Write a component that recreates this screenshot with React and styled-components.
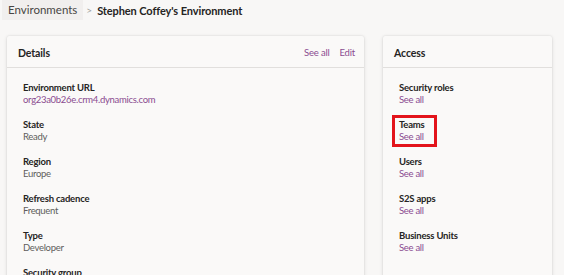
import React from 'react'
import styled, { createGlobalStyle } from 'styled-components'

const GlobalStyle = createGlobalStyle`
  html, body {
    margin: 0;
    padding: 0;
    background: #f8f7f6;
    font-family: Lato, "Open Sans", sans-serif;
    color: #323130;
  }
`

const Page = styled.div`
  width: 564px;
  height: 275px;
  overflow: hidden;
  padding: 0 12px 0 7px;
  box-sizing: border-box;
`

const Breadcrumb = styled.div`
  display: flex;
  align-items: center;
  height: 20px;
  margin-left: -5px;
  font-size: 11.5px;
`

const Crumb = styled.span`
  background: #f1efee;
  color: #484644;
  padding: 0 6px;
  line-height: 20px;
`

const Chevron = styled.span`
  color: #a19f9d;
  margin: 0 5px 0 3px;
  font-size: 10px;
`

const Current = styled.span`
  font-weight: 700;
  font-size: 11px;
  color: #252423;
  letter-spacing: -0.1px;
`

const Columns = styled.div`
  display: grid;
  grid-template-columns: 357px 169px;
  column-gap: 19px;
  margin-top: 16px;
`

const Card = styled.section`
  background: #faf9f8;
  border-radius: 2px;
  box-shadow: 0 0 2px rgba(0, 0, 0, 0.12), 0 1px 4px rgba(0, 0, 0, 0.1);
  height: 260px;
`

const CardHeader = styled.header`
  display: flex;
  align-items: center;
  justify-content: space-between;
  height: 32px;
  padding: 2px 9px 0 11px;
  box-sizing: border-box;
  border-bottom: 1px solid #e1dfdd;
`

const CardTitle = styled.h2`
  margin: 0;
  font-size: 10.5px;
  font-weight: 700;
  letter-spacing: -0.1px;
  color: #252423;
`

const Actions = styled.div`
  display: flex;
  gap: 10px;
`

const Link = styled.a`
  color: #8a4c90;
  font-size: 9.5px;
  letter-spacing: -0.2px;
  text-decoration: none;
  cursor: pointer;
`

const CardBody = styled.div`
  display: flex;
  flex-direction: column;
  gap: 13px;
  padding: 14px 16px;
`

const Item = styled.div`
  display: flex;
  flex-direction: column;
  width: fit-content;
  ${props => props.highlight && `
    border: 3px solid #e3141b;
    padding: 1px 9px 1px 4px;
    margin: -4px -12px -4px -7px;
  `}
`

const Label = styled.div`
  font-size: 9.5px;
  font-weight: 700;
  line-height: 12px;
  letter-spacing: -0.2px;
  color: #252423;
`

const Value = styled.div`
  font-size: 9.5px;
  line-height: 12px;
  letter-spacing: -0.3px;
  color: ${props => (props.link ? '#8a4c90' : '#605e5c')};
`

const details = [
  { label: 'Environment URL', value: 'org23a0b26e.crm4.dynamics.com', link: true },
  { label: 'State', value: 'Ready' },
  { label: 'Region', value: 'Europe' },
  { label: 'Refresh cadence', value: 'Frequent' },
  { label: 'Type', value: 'Developer' },
  { label: 'Security group', value: 'None' },
]

const access = ['Security roles', 'Teams', 'Users', 'S2S apps', 'Business Units']

export default function App() {
  return (
    <Page>
      <GlobalStyle />
      <Breadcrumb>
        <Crumb>Environments</Crumb>
        <Chevron>&gt;</Chevron>
        <Current>Stephen Coffey's Environment</Current>
      </Breadcrumb>
      <Columns>
        <Card>
          <CardHeader>
            <CardTitle>Details</CardTitle>
            <Actions>
              <Link>See all</Link>
              <Link>Edit</Link>
            </Actions>
          </CardHeader>
          <CardBody>
            {details.map(d => (
              <Item key={d.label}>
                <Label>{d.label}</Label>
                <Value link={d.link}>{d.value}</Value>
              </Item>
            ))}
          </CardBody>
        </Card>
        <Card>
          <CardHeader>
            <CardTitle>Access</CardTitle>
          </CardHeader>
          <CardBody>
            {access.map(a => (
              <Item key={a} highlight={a === 'Teams'}>
                <Label>{a}</Label>
                <Value link>See all</Value>
              </Item>
            ))}
          </CardBody>
        </Card>
      </Columns>
    </Page>
  )
}
